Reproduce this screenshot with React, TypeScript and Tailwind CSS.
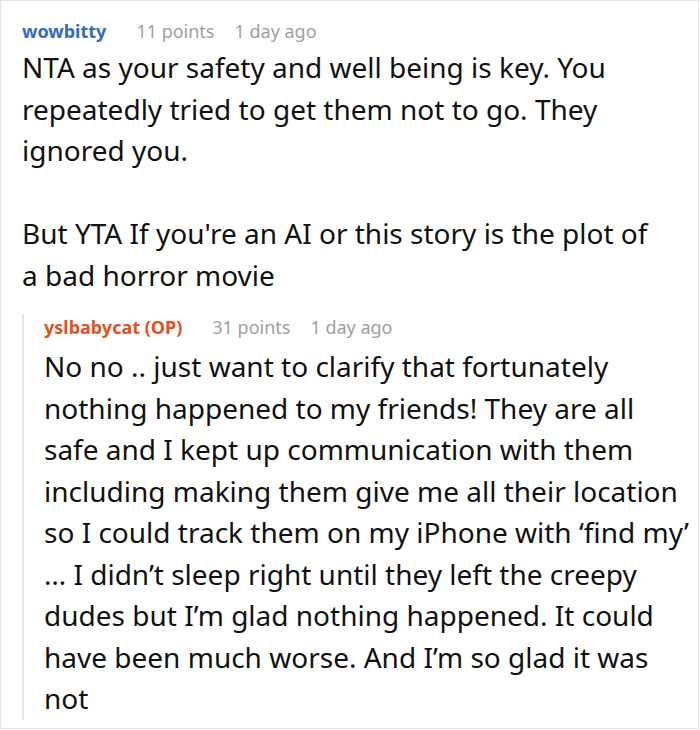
export default function App() {
  const font = { fontFamily: '"Noto Sans", "Open Sans", sans-serif' };
  return (
    <div
      className="w-[699px] h-[729px] border border-[#e4e4e4] bg-white overflow-hidden box-border pl-[21px] pt-[17px]"
      style={font}
    >
      <div className="flex items-baseline gap-[30px] text-[18px] leading-[26px]">
        <span className="font-bold text-[#336bbd]">wowbitty</span>
        <span className="text-[#a0a0a0]">11 points</span>
        <span className="text-[#a0a0a0] -ml-[10px]">1 day ago</span>
      </div>
      <div className="text-[28px] leading-[41.5px] text-[#111] pr-[40px] mt-[3px]">
        <p>NTA as your safety and well being is key. You repeatedly tried to get them not to go. They ignored you.</p>
        <p className="mt-[41.5px]">But YTA If you're an AI or this story is the plot of a bad horror movie</p>
      </div>
      <div className="mt-[18px] border-l-2 border-[#e6e6e6] pl-[20px]">
        <div className="flex items-baseline gap-[30px] text-[18px] leading-[26px]">
          <span className="font-bold text-[#e0521f]">yslbabycat (OP)</span>
          <span className="text-[#a0a0a0]">31 points</span>
          <span className="text-[#a0a0a0] -ml-[10px]">1 day ago</span>
        </div>
        <p className="text-[28px] leading-[41.5px] text-[#111] mt-[6px]">
          No no .. just want to clarify that fortunately nothing happened to my friends! They are all
          <br />
          safe and I kept up communication with them including making them give me all their location so I could track them on my iPhone with ‘find my’ … I didn’t sleep right until they left the creepy dudes but I’m glad nothing happened. It could have been much worse. And I’m so glad it was not
        </p>
      </div>
    </div>
  );
}
